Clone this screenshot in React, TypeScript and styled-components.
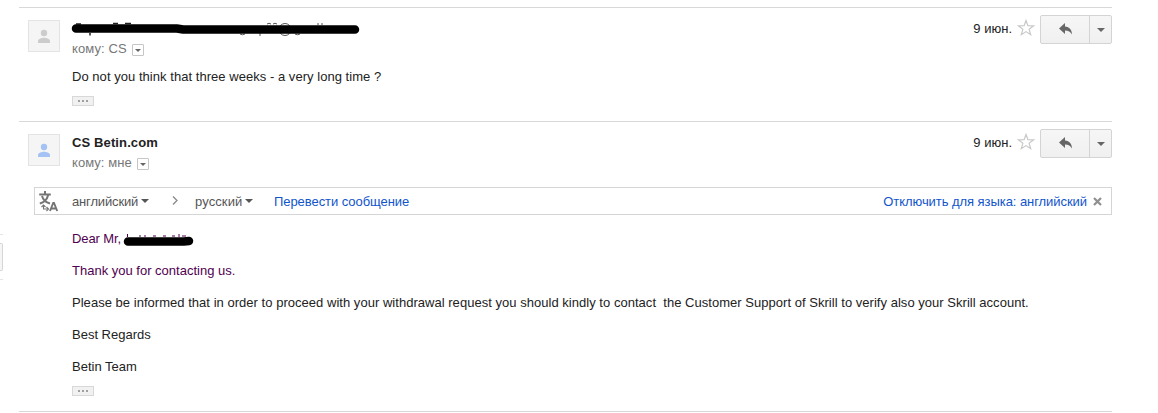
import React from "react";
import styled, { createGlobalStyle } from "styled-components";

const GlobalStyle = createGlobalStyle`
  * { box-sizing: border-box; }
  body { margin: 0; background: #fff; font-family: "Liberation Sans", Arial, sans-serif; font-size: 13px; color: #222; }
`;

const Page = styled.div`
  display: flex;
  height: 413px;
  overflow: hidden;
`;

const SideStub = styled.aside`
  width: 3px;
  height: 46px;
  margin: 234px 16px 0 0;
  padding-top: 8px;
  border-top: 1px solid #e5e5e5;
  border-bottom: 1px solid #e5e5e5;
`;

const StubButton = styled.div`
  height: 28px;
  background: #f5f5f5;
  border: 1px solid #d5d5d5;
  border-left: 0;
  border-radius: 0 2px 2px 0;
`;

const Thread = styled.main`
  width: 1093px;
  padding-top: 7px;
`;

const Message = styled.article<{ $height: number }>`
  height: ${(p) => p.$height}px;
  border-top: 1px solid #d8d8d8;
`;

const Header = styled.header`
  display: flex;
  align-items: flex-start;
  height: 58px;
  padding: 7px 0 0 9px;
`;

const Avatar = styled.div`
  width: 32px;
  height: 32px;
  margin: 5px 12px 0 0;
  background: #f5f5f5;
  border: 1px solid #e3e3e3;
  svg { display: block; }
`;

const Sender = styled.div`
  flex: 1;
  padding-top: 5px;
`;

const Name = styled.div`
  height: 17px;
  line-height: 18px;
  font-weight: bold;
  letter-spacing: 0.12px;
`;

const Recipient = styled.div<{ $spacing: number }>`
  display: flex;
  height: 20px;
  line-height: 24px;
  color: #777;
  letter-spacing: ${(p) => p.$spacing}px;
`;

const Details = styled.span`
  display: flex;
  align-items: center;
  justify-content: center;
  width: 12px;
  height: 12px;
  margin: 7px 0 0 5px;
  border: 1px solid #c6c6c6;
  border-radius: 1px;
`;

const Caret = styled.span<{ $size: number; $color?: string }>`
  border: ${(p) => p.$size}px solid transparent;
  border-top-color: ${(p) => p.$color ?? "#666"};
  border-bottom: 0;
`;

const DateText = styled.time`
  padding-top: 6px;
  line-height: 16px;
`;

const Star = styled.svg`
  width: 18px;
  height: 18px;
  margin: 4px 5px 0 5px;
`;

const Actions = styled.div`
  display: flex;
  width: 72px;
  height: 29px;
  border: 1px solid #d4d4d4;
  border-radius: 2px;
  background: linear-gradient(#f6f6f6, #f0f0f0);
`;

const Reply = styled.div`
  width: 49px;
  border-right: 1px solid #d4d4d4;
  svg { display: block; }
`;

const More = styled.div`
  display: flex;
  flex: 1;
  align-items: center;
  justify-content: center;
`;

const Body = styled.div<{ $top: number }>`
  padding: ${(p) => p.$top}px 0 0 53px;
`;

const Line = styled.p<{ $spacing: number; $purple?: boolean; $gap?: number }>`
  display: flex;
  margin: 0 0 ${(p) => p.$gap ?? 16}px;
  line-height: 16px;
  white-space: pre;
  letter-spacing: ${(p) => p.$spacing}px;
  color: ${(p) => (p.$purple ? "#500050" : "#222")};
`;

const Ellipsis = styled.div`
  display: flex;
  align-items: center;
  justify-content: center;
  gap: 2px;
  width: 22px;
  height: 10px;
  background: #f1f1f1;
  border: 1px solid #d8d8d8;
`;

const Dot = styled.i`
  width: 2px;
  height: 2px;
  background: #a0a0a0;
`;

const Translate = styled.section`
  display: flex;
  height: 28px;
  margin: 7px 0 0 15px;
  padding: 0 9px 0 3px;
  border: 1px solid #d5d5d5;
  line-height: 27px;
  color: #555;
`;

const Language = styled.span<{ $width: number; $spacing: number }>`
  display: flex;
  align-items: center;
  gap: 3px;
  width: ${(p) => p.$width}px;
  letter-spacing: ${(p) => p.$spacing}px;
`;

const Link = styled.span<{ $spacing: number }>`
  color: #15c;
  letter-spacing: ${(p) => p.$spacing}px;
`;

const Spacer = styled.span`
  flex: 1;
`;

const Marker = styled.svg`
  display: block;
  overflow: visible;
`;

const Person = ({ color }: { color: string }) => (
  <Avatar>
    <svg width="30" height="30" viewBox="0 0 30 30" fill={color}>
      <circle cx="15" cy="12" r="3.2" />
      <path d="M9 22v-2c0-2.300 4-3.200 6-3.200s6 .9 6 3.200v2z" />
    </svg>
  </Avatar>
);

const Controls = () => (
  <>
    <DateText>9 июн.</DateText>
    <Star viewBox="0 0 18 18" fill="none" stroke="#c8c8c8" strokeWidth="1.2">
      <path d="M9 1.500 10.900 6.700 16.500 6.900 12.100 10.300 13.700 15.700 9 12.600 4.300 15.700 5.900 10.300 1.500 6.900 7.100 6.700z" />
    </Star>
    <Actions>
      <Reply>
        <svg width="48" height="27" viewBox="0 0 48 27" fill="#666">
          <path d="M18 12.500 24 7v3.500c4.500.4 7 3.500 7 8-1.600-2.700-3.500-4-7-4V18z" />
        </svg>
      </Reply>
      <More><Caret $size={4} /></More>
    </Actions>
  </>
);

const Quote = () => (
  <Ellipsis><Dot /><Dot /><Dot /></Ellipsis>
);

export default function App() {
  return (
    <Page>
      <GlobalStyle />
      <SideStub><StubButton /></SideStub>
      <Thread>
        <Message $height={114}>
          <Header>
            <Person color="#ccc" />
            <Sender>
              <Marker width="290" height="17" viewBox="0 0 290 17" fill="none">
                <path d="M4 4h5M41 3.500h5M53 3.500h6M18 13v2.500" stroke="#222" strokeWidth="1.500" />
                <path d="M195 4q2-1.500 4 0M201 4q2-1.500 4 0M246 3v2M250 3v2M168 14q2.500 1.500 5 0M188 12v4M223 14q2.500 1.500 5 0" stroke="#555" />
                <ellipse cx="213" cy="9.500" rx="6" ry="6" stroke="#555" />
                <path d="M4 8.500H105L111 9.500H283" stroke="#000" strokeWidth="8.500" strokeLinecap="round" />
              </Marker>
              <Recipient $spacing={0.1}>кому: CS<Details><Caret $size={3} /></Details></Recipient>
            </Sender>
            <Controls />
          </Header>
          <Body $top={3}>
            <Line $spacing={0.04} $gap={11}>Do not you think that three weeks - a very long time ?</Line>
            <Quote />
          </Body>
        </Message>
        <Message $height={290}>
          <Header>
            <Person color="#a4c2f4" />
            <Sender>
              <Name>CS Betin.com</Name>
              <Recipient $spacing={0.05}>кому: мне<Details><Caret $size={3} /></Details></Recipient>
            </Sender>
            <Controls />
          </Header>
          <Translate>
            <svg width="34" height="26" viewBox="0 0 34 26" fill="none" stroke="#757575" strokeWidth="2">
              <path d="M1.200 6.500h11.600M7 3v3.500" />
              <path d="M4 8C5 11.500 8 14.500 12 15.500M10.200 7C9 11.500 6 14.500 1.800 15.500" />
              <path d="M5.500 17v4H9.500M3.500 19l2-2 2 2M8.500 19l2 2-2 2" strokeWidth="1.100" />
              <path d="M12 23 15.200 15h.8l3.200 8M13.300 20.500h4.600" strokeWidth="1.900" />
            </svg>
            <Language $width={100} $spacing={-0.15}>английский<Caret $size={4} $color="#555" /></Language>
            <svg width="23" height="26" viewBox="0 0 23 26" fill="none" stroke="#888" strokeWidth="1.300">
              <path d="m1 8.500 4 4-4 4" />
            </svg>
            <Language $width={79} $spacing={0.1}>русский<Caret $size={4} $color="#555" /></Language>
            <Link $spacing={-0.06}>Перевести сообщение</Link>
            <Spacer />
            <Link $spacing={-0.06}>Отключить для языка: английский</Link>
            <svg width="15" height="26" viewBox="0 0 15 26" stroke="#909090" strokeWidth="2.200">
              <path d="m7 10 7 7M14 10l-7 7" />
            </svg>
          </Translate>
          <Body $top={16}>
            <Line $spacing={-0.1} $purple>
              Dear Mr,{" "}
              <Marker width="72" height="16" viewBox="1 0 72 16" fill="none">
                <path d="M3.500 3v3M16 4v2M21 4v2M29 5h3M39 5h3M48 5h3M55 3v3M58 5h4" stroke="#500050" />
                <path d="M4 10.500H60L65 10" stroke="#000" strokeWidth="8.500" strokeLinecap="round" />
              </Marker>
            </Line>
            <Line $spacing={0} $purple>Thank you for contacting us.</Line>
            <Line $spacing={0.03}>Please be informed that in order to proceed with your withdrawal request you should kindly to contact  the Customer Support of Skrill to verify also your Skrill account.</Line>
            <Line $spacing={0}>Best Regards</Line>
            <Line $spacing={0} $gap={11}>Betin Team</Line>
            <Quote />
          </Body>
        </Message>
        <Message $height={2} />
      </Thread>
    </Page>
  );
}
